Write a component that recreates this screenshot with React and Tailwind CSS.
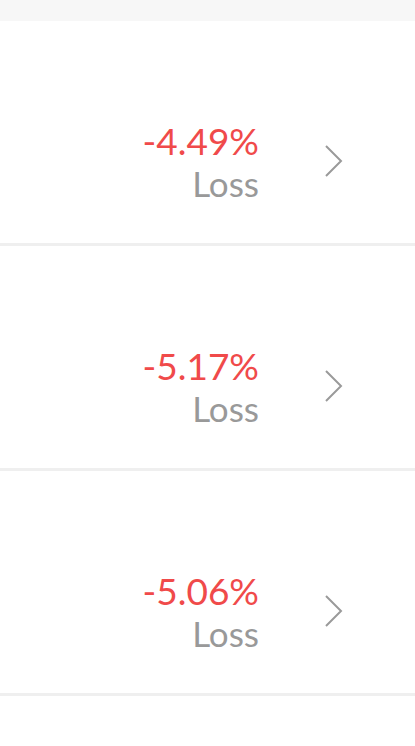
export default function App() {
  const rows = ["-4.49%", "-5.17%", "-5.06%"];
  return (
    <div className="w-[415px] h-[746px] bg-white overflow-hidden" style={{ fontFamily: "Lato, 'Open Sans', sans-serif" }}>
      <div className="h-[21px] bg-[#f7f7f7]" />
      {rows.map((r) => (
        <div key={r}>
          <div className="h-[222px] flex items-center justify-end pt-[57px] pr-[72px]">
            <div className="flex flex-col items-end">
              <div className="text-[37px] leading-[45px] text-[#f04a4a]">{r}</div>
              <div className="text-[35px] leading-[40px] text-[#999999]">Loss</div>
            </div>
            <svg className="ml-[66px]" width="18" height="32" viewBox="0 0 18 32" fill="none">
              <polyline points="1,1 16,16 1,31" stroke="#9a9a9a" strokeWidth="2" />
            </svg>
          </div>
          <div className="h-[3px] bg-[#efefef]" />
        </div>
      ))}
    </div>
  );
}
